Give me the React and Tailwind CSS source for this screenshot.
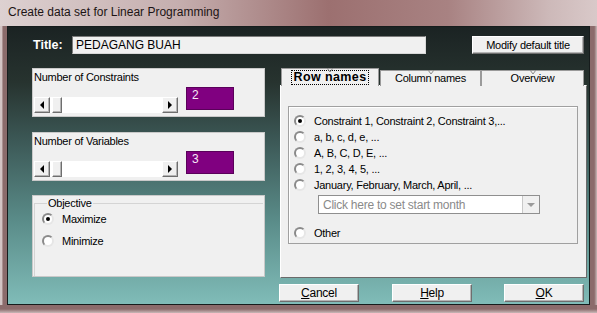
import React from "react";

const raised =
  "bg-[#f0f0f0] border border-t-white border-l-white border-r-[#6e6e6e] border-b-[#6e6e6e] shadow-[inset_-1px_-1px_0_#b4b4b4]";

function Radio({ checked, label, className = "" }) {
  return (
    <div className={"flex items-center h-[16px] " + className}>
      <span className="relative w-[12px] h-[12px] rounded-full border-2 border-t-[#8a8a8a] border-l-[#8a8a8a] border-r-[#e6e6e6] border-b-[#e6e6e6] bg-white flex items-center justify-center">
        {checked && <span className="w-[4px] h-[4px] rounded-full bg-black" />}
      </span>
      <span className="ml-[8px]">{label}</span>
    </div>
  );
}

function ScrollBar() {
  return (
    <div className="flex w-[144px] h-[16px] bg-white">
      <div className={"w-[16px] h-[16px] flex items-center justify-center " + raised}>
        <span className="w-0 h-0 border-y-[4px] border-y-transparent border-r-[4px] border-r-black" />
      </div>
      <div className={"ml-[2px] w-[10px] h-[16px] " + raised} />
      <div className="flex-1" />
      <div className={"w-[16px] h-[16px] flex items-center justify-center " + raised}>
        <span className="w-0 h-0 border-y-[4px] border-y-transparent border-l-[4px] border-l-black" />
      </div>
    </div>
  );
}

function CountPanel({ label, value, className = "" }) {
  return (
    <div className={"h-[49px] bg-[#f0f0f0] border border-[#c9c9c9] pt-[1px] pl-[1px] " + className}>
      <div className="h-[14px] leading-[14px]">{label}</div>
      <div className="flex items-start mt-[3px]">
        <div className="mt-[10px]">
          <ScrollBar />
        </div>
        <div className="ml-[8px] w-[48px] h-[23px] bg-[#800080] border border-[#5a005a] text-[#f6e8f6] text-[12px] pl-[5px] leading-[14px]">
          {value}
        </div>
      </div>
    </div>
  );
}

function Notch() {
  return (
    <svg width="6" height="5" viewBox="0 0 6 5" className="absolute -top-[1px]">
      <path d="M0 0 L3 4 L6 0" fill="none" stroke="#8a8a8a" strokeWidth="1" />
    </svg>
  );
}

function Tab({ label, className = "" }) {
  return (
    <div
      className={
        "relative h-[16px] mt-[2px] bg-[#f0f0f0] border border-[#9a9a9a] border-b-0 flex items-center justify-center " +
        className
      }
    >
      <Notch />
      {label}
    </div>
  );
}

function Button({ letter, rest, className = "" }) {
  return (
    <div className={"w-[80px] h-[18px] flex items-center justify-center text-[12px] " + raised + " " + className}>
      <span>
        <span className="underline">{letter}</span>
        {rest}
      </span>
    </div>
  );
}

export default function App() {
  return (
    <div
      className="w-[597px] h-[313px] overflow-hidden flex flex-col bg-[#9b7a7a] text-[11px] tracking-[-0.25px] text-black"
      style={{ fontFamily: '"Liberation Sans", Arial, sans-serif' }}
    >
      {/* title bar */}
      <div className="h-[26px] shrink-0 flex items-center pl-[8px] pb-[3px] text-[12px] tracking-normal text-[#1c1414] bg-[linear-gradient(90deg,#ddd1d1_0%,#c5aeae_30%,#9c7070_55%,#a88282_75%,#cdb9b9_92%,#d9c9c9_100%)]">
        Create data set for Linear Programming
      </div>

      <div className="flex flex-1 min-h-0">
        <div className="w-[7px] shrink-0 bg-[linear-gradient(90deg,#d3c4c4_0%,#d3c4c4_30%,#8b6b6b_40%,#8b6b6b_100%)]" />

        <div className="w-[583px] h-[279px] shrink-0 border border-[#161c1c] bg-[linear-gradient(180deg,#1b2323_0%,#27332f_20%,#3d5a58_42%,#5a8c89_70%,#80bcb8_100%)]">
          {/* title row */}
          <div className="flex items-center mt-[9px] h-[18px]">
            <div className="ml-[25px] w-[39px] font-bold text-white text-[12.5px] tracking-normal">Title:</div>
            <div className="w-[354px] h-[18px] bg-[#f0f0f0] border border-t-[#7a7a7a] border-l-[#7a7a7a] border-r-[#d8d8d8] border-b-[#d8d8d8] pl-[3px] text-[12px] leading-[16px] tracking-normal">
              PEDAGANG BUAH
            </div>
            <div className={"ml-[46px] w-[112px] h-[18px] flex items-center justify-center " + raised}>
              Modify default title
            </div>
          </div>

          <div className="flex mt-[14px]">
            {/* left column */}
            <div className="ml-[24px] w-[233px]">
              <CountPanel label="Number of Constraints" value="2" />
              <CountPanel label="Number of Variables" value="3" className="mt-[15px]" />
              <div className="mt-[14px] h-[82px] bg-[#f0f0f0] border border-[#c9c9c9] pt-[1px] px-[1px]">
                <fieldset className="h-[79px] border border-[#d4d4d4] border-r-0 border-b-0 pl-[7px] pt-[2px]">
                  <legend className="px-[1px] leading-[12px] ml-[5px]">Objective</legend>
                  <Radio checked label="Maximize" />
                  <Radio label="Minimize" className="mt-[6px]" />
                </fieldset>
              </div>
            </div>

            {/* right column */}
            <div className="ml-[15px] w-[307px]">
              <div className="flex h-[18px] items-end pl-[1px]">
                <div className="relative w-[98px] h-[18px] bg-[#f0f0f0] border border-[#9a9a9a] border-b-0 flex items-center justify-center z-10">
                  <Notch />
                  <span className="font-bold text-[12.5px] tracking-[0.4px] outline-1 outline-dotted outline-black leading-[13px] px-[1px]">
                    Row names
                  </span>
                </div>
                <Tab label="Column names" className="ml-[1px] w-[101px]" />
                <Tab label="Overview" className="w-[103px]" />
              </div>
              <div className="-mt-[1px] h-[193px] bg-[#f0f0f0] border border-t-white border-l-white border-r-[#6a6a6a] border-b-[#6a6a6a] pt-[20px] pl-[7px]">
                <div className="w-[290px] h-[138px] border border-[#a0a0a0] shadow-[inset_1px_1px_0_#fff] pt-[6px] pl-[5px]">
                  <Radio checked label="Constraint 1, Constraint 2, Constraint 3,..." />
                  <Radio label="a, b, c, d, e, ..." />
                  <Radio label="A, B, C, D, E, ..." />
                  <Radio label="1, 2, 3, 4, 5, ..." />
                  <Radio label="January, February, March, April, ..." />
                  <div className="ml-[24px] mt-[2px] w-[222px] h-[19px] bg-white border border-[#8f8f8f] flex items-center">
                    <span className="flex-1 pl-[4px] text-[#8a8a8a] text-[12px]">Click here to set start month</span>
                    <div className="w-[17px] h-[17px] bg-[#f0f0f0] border-l border-[#c8c8c8] flex items-center justify-center">
                      <span className="w-0 h-0 border-x-[4px] border-x-transparent border-t-[4px] border-t-[#9a9a9a]" />
                    </div>
                  </div>
                  <Radio label="Other" className="mt-[11px]" />
                </div>
              </div>

              <div className="flex mt-[6px] -ml-[1px]">
                <Button letter="C" rest="ancel" />
                <Button letter="H" rest="elp" className="ml-[33px]" />
                <Button letter="O" rest="K" className="ml-[32px]" />
              </div>
            </div>
          </div>
        </div>

        <div className="w-[7px] shrink-0 bg-[linear-gradient(90deg,#8b6b6b_0%,#8b6b6b_60%,#c9b8b8_100%)]" />
      </div>
      <div className="h-[8px] shrink-0 bg-[linear-gradient(180deg,#8b6b6b_0%,#8b6b6b_50%,#c9b8b8_100%)]" />
    </div>
  );
}
